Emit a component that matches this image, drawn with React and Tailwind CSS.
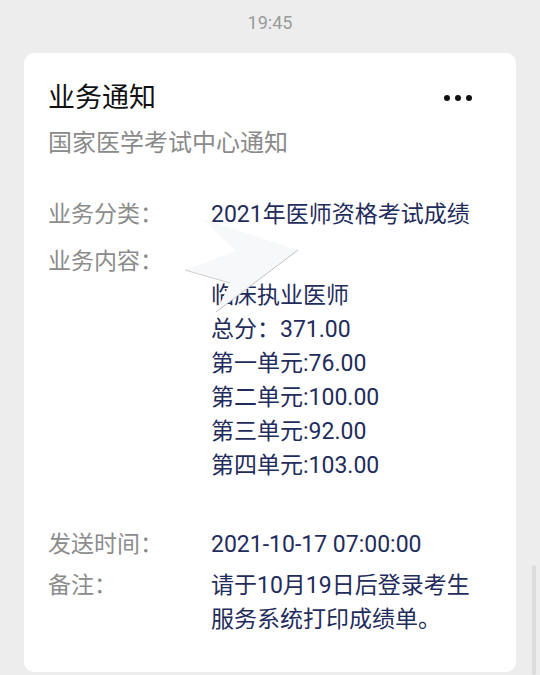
import React from "react";

const font = { fontFamily: 'Roboto, "Noto Sans CJK SC", "Noto Sans", sans-serif' };

function Row({ label, children, className = "" }) {
  return (
    <div className={"flex " + className}>
      <div className="w-[163px] shrink-0 text-[#8c8c8c]">{label}</div>
      <div className="text-[#1f2c5c]">{children}</div>
    </div>
  );
}

export default function App() {
  return (
    <div
      className="relative w-[540px] h-[675px] bg-[#ededed] overflow-hidden"
      style={font}
    >
      <div className="pt-[9px] text-center text-[18px] leading-[28px] text-[#9a9a9a]">19:45</div>
      <div className="mx-[24px] mt-[16px] bg-white rounded-[10px] pl-[24px] pr-[24px] pt-[25px] pb-[35px] relative">
        <div className="flex items-center justify-between">
          <div className="text-[27px] leading-[40px] text-[#111]">业务通知</div>
          <div className="flex gap-[5px] pr-[20px]">
            <span className="w-[6px] h-[6px] rounded-full bg-[#111]"></span>
            <span className="w-[6px] h-[6px] rounded-full bg-[#111]"></span>
            <span className="w-[6px] h-[6px] rounded-full bg-[#111]"></span>
          </div>
        </div>
        <div className="mt-[8px] text-[24px] leading-[34px] text-[#8a8a8a]">国家医学考试中心通知</div>

        <div className="mt-[38px] text-[23px] leading-[34px]">
          <Row label="业务分类：">2021年医师资格考试成绩</Row>
          <Row label="业务内容：" className="mt-[13px]">
            <div>&nbsp;</div>
            <div>临床执业医师</div>
            <div>总分：371.00</div>
            <div>第一单元:76.00</div>
            <div>第二单元:100.00</div>
            <div>第三单元:92.00</div>
            <div>第四单元:103.00</div>
          </Row>
          <Row label="发送时间：" className="mt-[45px]">2021-10-17 07:00:00</Row>
          <Row label="备注：" className="mt-[7px]">
            <div>请于10月19日后登录考生</div>
            <div>服务系统打印成绩单。</div>
          </Row>
        </div>
      </div>

      <svg
        className="absolute left-0 top-0 pointer-events-none"
        width="540"
        height="675"
        viewBox="0 0 540 675"
      >
        <polygon
          points="203,219 298,250 216,312 230,283 185,270 236,251"
          fill="#f7f8fa"
        />
        <line x1="298" y1="250" x2="216" y2="312" stroke="#c0c0c0" strokeWidth="1" />
        <line x1="185" y1="270" x2="230" y2="283" stroke="#cccccc" strokeWidth="1" />
      </svg>

      <div className="absolute left-[532px] top-[565px] w-[4px] h-[110px] rounded-full bg-[#dcdcdc]"></div>
    </div>
  );
}
